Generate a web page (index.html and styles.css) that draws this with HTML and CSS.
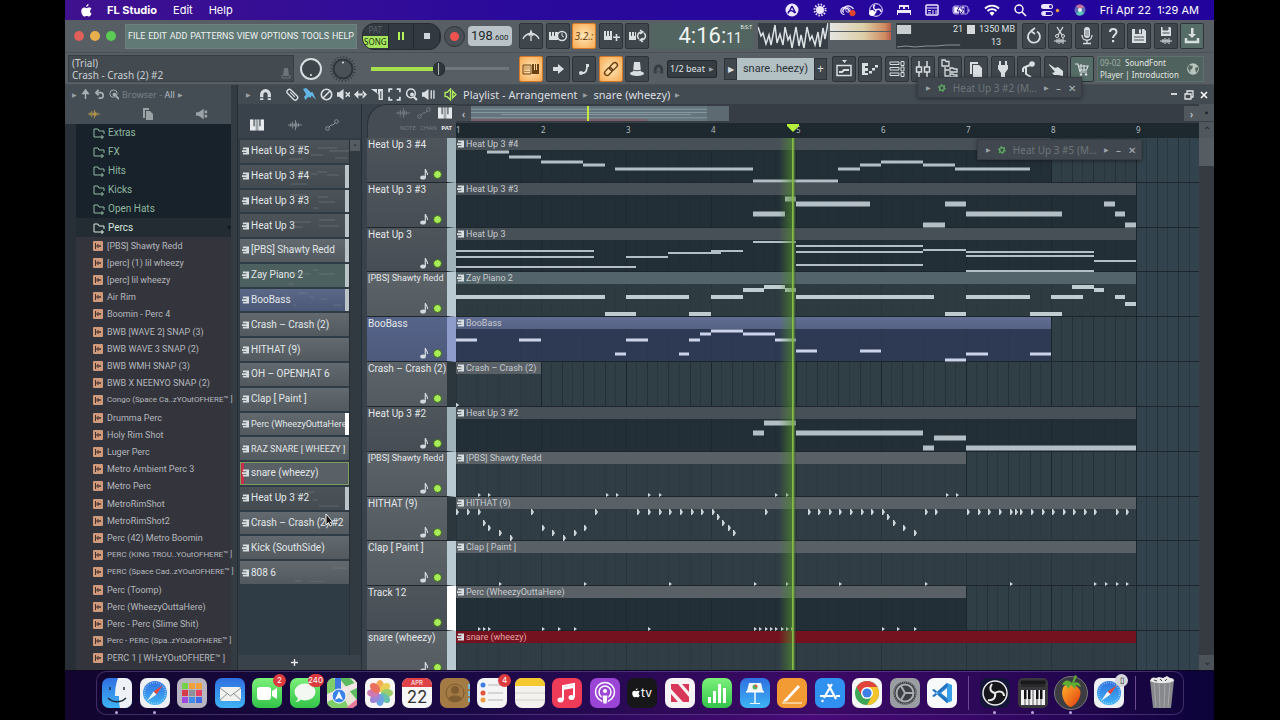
FILE: index.html
```
<!DOCTYPE html>
<html lang="en">
<head>
<meta charset="utf-8">
<title>FL Studio</title>
<link rel="stylesheet" href="styles.css">
</head>
<body>
<svg class="defs" aria-hidden="true">
  <defs>
    <marker id="hit" markerWidth="5" markerHeight="5" refX="0" refY="2" markerUnits="userSpaceOnUse"><path d="M0 0L3 2L0 4z" fill="#cfd6da"/></marker>
    <marker id="hat" markerWidth="5" markerHeight="6" refX="0" refY="3" markerUnits="userSpaceOnUse"><path d="M0 0h1l2 3l-2 3h-1z" fill="#cfd6da"/></marker>
    <linearGradient id="gblue" x2="0" y2="1"><stop stop-color="#2f6fe0"/><stop offset="1" stop-color="#3fb4f5"/></linearGradient>
    <linearGradient id="ggreen" x2="0" y2="1"><stop stop-color="#7cf07a"/><stop offset="1" stop-color="#33c44a"/></linearGradient>
    <linearGradient id="gfruit" x2="1" y2="1"><stop stop-color="#ffb42a"/><stop offset="1" stop-color="#e23a12"/></linearGradient>
  </defs>
  <symbol id="i-clip" viewBox="0 0 8 8"><path d="M1 0h7v8H1V6h4V5H0V3h5V2H1z" fill="#d8dde0"/></symbol>
  <symbol id="i-folder" viewBox="0 0 12 12"><path d="M1 2h4l1 2h5v3M1 2v8h6M7 10h4M9 8v4" fill="none" stroke="currentColor"/></symbol>
  <symbol id="i-sample" viewBox="0 0 10 10"><rect width="10" height="10" rx="1" fill="#cf9a7c"/><path d="M2.500 2v6M3 5h5M5 3v4M7 4v2" stroke="#47302a" fill="none"/></symbol>
  <symbol id="i-note" viewBox="0 0 9 12"><ellipse cx="3" cy="9.500" rx="2.800" ry="2" fill="#d4dadd"/><path d="M5.300 9.500V1c0 2 2.700 3 2.200 6" fill="none" stroke="#d4dadd" stroke-width="1.200"/></symbol>
  <symbol id="i-wave" viewBox="0 0 16 12"><path d="M0 6h16M3 4v4M5 2v8M7 4v4M8.500 0v12M10 3v6M12 4v4" fill="none" stroke="currentColor"/></symbol>
  <symbol id="i-auto" viewBox="0 0 14 12"><circle cx="2.500" cy="9.500" r="1.800" fill="none" stroke="currentColor"/><circle cx="11.500" cy="2.500" r="1.800" fill="none" stroke="currentColor"/><path d="M4 8l2-2h2l2-2" fill="none" stroke="currentColor"/></symbol>
  <symbol id="i-keys" viewBox="0 0 12 10"><path d="M0 0h3v6h1V0h1v10H0zM5.500 0h1v10h-1zM7 0h1v6h1V0h3v10H7z" fill="currentColor"/></symbol>
  <symbol id="i-gear" viewBox="0 0 12 12"><circle cx="6" cy="6" r="3.500" fill="none" stroke="#5fae63" stroke-width="2"/><circle cx="6" cy="6" r="5" fill="none" stroke="#5fae63" stroke-width="2" stroke-dasharray="2 3.240"/></symbol>
  <symbol id="i-magnet" viewBox="0 0 12 12"><path d="M2.500 11V6a3.500 3.500 0 0 1 7 0v5" fill="none" stroke="currentColor" stroke-width="3"/><path d="M0 9h12" stroke="#454d54"/></symbol>
  <symbol id="i-compass" viewBox="0 0 30 30"><rect width="30" height="30" rx="7" fill="#eef1f4"/><circle cx="15" cy="15" r="12" fill="url(#gblue)"/><circle cx="15" cy="15" r="10.500" fill="none" stroke="#bfe2ff" stroke-dasharray=".6 1.600" stroke-width="1.500"/><path d="M23 7l-6.500 9.500-3-3z" fill="#e2483d"/><path d="M7 23l6.500-9.500 3 3z" fill="#f4f4f4"/></symbol>
</svg>

<div class="desktop">
  <header class="menubar">
    <svg class="apple" viewBox="0 0 12 14"><path d="M8.300 0c.1 1.600-1.100 3-2.600 3.100C5.600 1.600 6.900.2 8.300 0zM11.600 10.300c-.6 1.500-1.600 3.200-2.900 3.200-1 0-1.200-.6-2.400-.6s-1.500.6-2.400.6C2.200 13.500.3 10.300.3 7.700c0-2.500 1.600-3.900 3.200-3.900 1 0 1.900.7 2.600.7.600 0 1.700-.8 3-.8 1 0 1.900.5 2.400 1.300-2.300 1.400-1.900 4.400.1 5.300z" fill="#fff"/></svg>
    <nav class="macmenu"><a href="#" class="strong">FL Studio</a><a href="#">Edit</a><a href="#">Help</a></nav>
    <div class="status">
      <svg viewBox="0 0 16 14"><circle cx="8" cy="7" r="6.500" fill="#eee8ff"/><path d="M8 3l3.500 7M8 3l-2 4M4 10.500c1-4 4-4 7-.5" stroke="#2a0b9a" stroke-width="1.500" fill="none"/></svg>
      <svg viewBox="0 0 16 14"><circle cx="8" cy="7" r="4" fill="#eee8ff"/><circle cx="8" cy="7" r="5.500" fill="none" stroke="#eee8ff" stroke-width="2" stroke-dasharray="1.400 1.480"/></svg>
      <svg viewBox="0 0 18 14"><path d="M5 12a4 4 0 0 1 0-8 6 5 0 0 1 10 2M4 10a3 3 0 1 1 5-4l2 3" fill="none" stroke="#eee8ff" stroke-width="1.500"/><circle cx="9" cy="7" r="2.500" fill="none" stroke="#eee8ff"/><circle cx="14" cy="10.500" r="3.500" fill="#e2452e"/></svg>
      <svg viewBox="0 0 16 14"><circle cx="8" cy="7" r="6.300" fill="none" stroke="#eee8ff"/><path d="M8 7c-3-1-3-4-1-5M8 7c3-2 5 0 5 2M8 7c0 3-2 4-4 4" fill="none" stroke="#eee8ff" stroke-width="1.500"/><circle cx="4" cy="10" r="3" fill="#fff"/></svg>
      <svg viewBox="0 0 16 14"><path d="M3 6V2h10v4h-1V4H9v2H7V4H4v2zM1 7h14v5h-1v-2H2v2H1z" fill="#eee8ff"/></svg>
      <svg viewBox="0 0 16 14"><rect x="2" y="2" width="12" height="10" rx="1" fill="none" stroke="#eee8ff" stroke-width="1.500"/><path d="M3 5h10M4 7.500h3M4 10h3M9 7v4M12 7v4" stroke="#eee8ff"/></svg>
      <svg class="battery" viewBox="0 0 20 14"><rect x="1" y="3" width="15" height="8" rx="2" fill="none" stroke="#b9aee8"/><path d="M2 4h10v6H2zM17 6v3" fill="#fff" stroke="#b9aee8"/><path d="M9 1L5 8h3l-1 5 5-7H9z" fill="#fff" stroke="#2a0b9a"/></svg>
      <svg viewBox="0 0 16 14"><path d="M1 5.500a10 10 0 0 1 14 0M3.500 8a6.500 6.500 0 0 1 9 0" fill="none" stroke="#fff" stroke-width="1.800"/><path d="M5.500 10a3.500 3.500 0 0 1 5 0L8 13z" fill="#fff"/></svg>
      <svg viewBox="0 0 14 14"><circle cx="6" cy="6" r="4" fill="none" stroke="#fff" stroke-width="1.400"/><path d="M9 9l4 4" stroke="#fff" stroke-width="1.600"/></svg>
      <svg class="control" viewBox="0 0 20 14"><rect x="1" y="1" width="12" height="5" rx="2.500" fill="#eee8ff"/><circle cx="10.500" cy="3.500" r="1.500" fill="#2a0b9a"/><rect x="1.500" y="8.500" width="11" height="4" rx="2" fill="none" stroke="#eee8ff"/><circle cx="4" cy="10.500" r="2" fill="#eee8ff"/><circle cx="17.500" cy="7.500" r="1.700" fill="#f09a3a"/></svg>
      <svg viewBox="0 0 14 14"><circle cx="7" cy="7" r="5.500" fill="#5c6db8"/><path d="M7 7L3 3a5 5 0 0 1 8 1z" fill="#c76d9c"/><path d="M7 7l-4 4a5 5 0 0 0 8-1z" fill="#57c6b6"/><circle cx="7" cy="7" r="2" fill="#e8eef8"/></svg>
      <span class="clock">Fri Apr 22&nbsp; 1:29 AM</span>
    </div>
  </header>

  <main class="window">
    <section class="bar">
      <div class="left-tools">
        <div class="lights"><button aria-label="Close" class="red"></button><button aria-label="Minimise" class="amber"></button><button aria-label="Zoom" class="lime"></button></div>
        <nav class="appmenu"><a href="#">FILE</a><a href="#">EDIT</a><a href="#">ADD</a><a href="#">PATTERNS</a><a href="#">VIEW</a><a href="#">OPTIONS</a><a href="#">TOOLS</a><a href="#">HELP</a></nav>
      </div>
      <div class="transport">
        <div class="playgroup">
          <button class="mode"><span>PAT</span><span class="on">SONG</span></button>
          <button aria-label="Pause"><svg viewBox="0 0 8 8"><path d="M1 0h2v8H1zM5 0h2v8H5z" fill="#b6f25a"/></svg></button>
          <button aria-label="Stop"><svg viewBox="0 0 8 8"><path d="M1 1h6v6H1z" fill="#cdd3da"/></svg></button>
        </div>
        <button class="record" aria-label="Record"></button>
        <output class="tempo">198<small>.600</small></output>
      </div>
      <div class="five">
        <button class="tool" aria-label="Metronome"><svg viewBox="0 0 20 20"><path d="M2 13c1-3 4-5 8-6 4 1 7 3 8 6M10 5v10M8 10l2-5 2 5" fill="none" stroke="currentColor" stroke-width="1.300"/></svg></button>
        <button class="tool" aria-label="Wait for input"><svg viewBox="0 0 20 20"><path d="M1 6h2v4h1V6h2v4h1V6h3v8H1z" fill="currentColor"/><circle cx="14" cy="10" r="4.500" fill="#3b4248" stroke="currentColor" stroke-width="1.500"/><path d="M14 7v3l2 1" stroke="currentColor" fill="none"/></svg></button>
        <button class="tool hot digits">3.2.:</button>
        <button class="tool" aria-label="Overdub"><svg viewBox="0 0 20 20"><path d="M3 5h2v5h1V5h2v5h1V5h2v9H3zM12 10.500h7V12h-7zM14.700 8h1.600v7h-1.600z" fill="currentColor"/></svg></button>
        <button class="tool" aria-label="Loop record"><svg viewBox="0 0 20 20"><path d="M2 6h2v4h1V6h2v4h1V6h1v8H2z" fill="currentColor"/><path d="M15 6a4 4 0 0 0-3 7M14 14a4 4 0 0 0 3-7M13 4l3 2-3 2M16 12l-3 2 3 2" fill="none" stroke="currentColor" stroke-width="1.500"/></svg></button>
      </div>
      <div class="time"><span class="big">4:16:</span><span class="small">11</span><small>B:S:T</small></div>
      <svg class="scope" viewBox="0 0 70 26"><path d="M0 4l3 9 2-3 3 11 3-9 2 10 4-20 2 18 3-9 3 11 2-18 3 13 2-4 2 12 4-21 3 19 2-11 3 13 3-21 3 13 2-4 3 9 3-13 2 15 3-19 2 11 3-16" fill="none" stroke="#dde2e5" stroke-width="1.500"/></svg>
      <div class="peaks"><div class="peak"></div><div class="peak"></div></div>
      <div class="cpu"><svg viewBox="0 0 72 26" preserveAspectRatio="none"><path d="M1 2h15v9H1z" fill="#c9ced0"/><path d="M1 24l10-1 9 1 12-1 10 0 12-1 14 0" fill="none" stroke="#8f979b"/></svg><span class="load">21</span><span class="mem"><i></i>1350 MB</span><span class="poly">13</span></div>
      <div class="seven">
        <button class="tool" aria-label="Undo"><svg viewBox="0 0 20 20"><path d="M8 5a6 6 0 1 0 5 .5M11 2L7 5l4 3" fill="none" stroke="currentColor" stroke-width="1.800"/></svg></button>
        <button class="tool" aria-label="Cut"><svg viewBox="0 0 20 20"><path d="M7 1l5 8M13 1L8 9" stroke="currentColor" stroke-width="1.300"/><circle cx="7" cy="10" r="1.500" fill="none" stroke="currentColor"/><circle cx="13" cy="10" r="1.500" fill="none" stroke="currentColor"/><path d="M4 15h12M7 13v4M9 12v6M11 13v4M13 12v6" stroke="currentColor"/></svg></button>
        <button class="tool" aria-label="Record audio"><svg viewBox="0 0 20 20"><rect x="7" y="1" width="6" height="11" rx="3" fill="currentColor"/><path d="M5 9c0 7 10 7 10 0M10 14v3M6 17.500h8" fill="none" stroke="currentColor" stroke-width="1.300"/><path d="M8 5h4M8 7h4M8 9h4" stroke="#4a5258" stroke-width=".7"/></svg></button>
        <button class="tool" aria-label="Help"><svg viewBox="0 0 20 20"><path d="M7 6c0-4 6.500-4 6.500 0 0 3-3.500 2.500-3.500 6" fill="none" stroke="currentColor" stroke-width="2"/><rect x="9" y="14" width="2.200" height="2.200" fill="currentColor"/></svg></button>
        <button class="tool" aria-label="Save"><svg viewBox="0 0 20 20"><path d="M3 3h12l2 2v12H3z" fill="currentColor"/><path d="M6 3h7v5H6z" fill="#4a5258"/><path d="M5 11h10M5 14h10" stroke="#4a5258"/><path d="M10 3.500h2v4h-2z" fill="currentColor"/></svg></button>
        <button class="tool" aria-label="Export"><svg viewBox="0 0 20 20"><path d="M5 1h9l1 1v8H5z" fill="currentColor"/><path d="M7 1h5v3H7zM6.500 7h7" fill="#4a5258" stroke="#4a5258"/><path d="M4 15h12M7 13v4M9 12v6M11 13v4M13 12v6" stroke="currentColor"/></svg></button>
        <button class="tool green" aria-label="Download"><svg viewBox="0 0 20 20"><path d="M9 2h2.500v6H14l-4 4-4-4h3z" fill="currentColor"/><path d="M4 12v4h12v-4" fill="none" stroke="currentColor" stroke-width="2.500"/></svg></button>
      </div>
    </section>

    <section class="bar second">
      <div class="hint"><span>(Trial)</span><span>Crash - Crash (2) #2</span><svg viewBox="0 0 10 12"><path d="M3 1h4l1 8H2z" fill="#6d757b"/><path d="M1 8v3h8V8" fill="none" stroke="#6d757b"/></svg></div>
      <div class="knobs">
        <svg viewBox="0 0 28 28"><circle cx="14" cy="14" r="10" fill="#3e454a" stroke="#d7dcdf" stroke-width="2"/><circle cx="14" cy="20" r="1" fill="#dfe3e5"/></svg>
        <svg viewBox="0 0 28 28"><circle cx="14" cy="14" r="12" fill="none" stroke="#343b40" stroke-width="2" stroke-dasharray="1 2.140"/><circle cx="14" cy="14" r="9.500" fill="#4b5257" stroke="#2f363b" stroke-width="2"/><circle cx="14" cy="7.500" r="1" fill="#dfe3e5"/></svg>
      </div>
      <input class="volume" type="range" min="0" max="100" value="49" aria-label="Main pitch">
      <div class="five">
        <button class="tool hot" aria-label="Typing keyboard"><svg viewBox="0 0 20 20"><path d="M2 6h8v9H2z" fill="none" stroke="currentColor"/><path d="M3.500 8h5M3.500 10h5M3.500 12.500h5" stroke="currentColor" stroke-dasharray="1 1"/><path d="M11 5h2v6h1V5h1v6h1V5h2v10h-7z" fill="currentColor"/></svg></button>
        <button class="tool" aria-label="Step"><svg viewBox="0 0 20 20"><path d="M5 8h5V5l6 5-6 5v-3H5z" fill="currentColor"/></svg></button>
        <button class="tool" aria-label="Glide"><svg viewBox="0 0 20 20"><path d="M6 14h3c3 0 4-2 4-7" fill="none" stroke="currentColor" stroke-width="1.800"/><circle cx="7" cy="14" r="2" fill="currentColor"/><path d="M12 5h3v3h-3z" fill="currentColor"/></svg></button>
        <button class="tool hot" aria-label="Link"><svg viewBox="0 0 20 20"><g transform="rotate(-45 10 10)" fill="none" stroke="currentColor" stroke-width="1.400"><rect x="2" y="7.500" width="9" height="5" rx="2.500"/><rect x="9" y="7.500" width="9" height="5" rx="2.500"/></g></svg></button>
        <button class="tool" aria-label="Wizard"><svg viewBox="0 0 20 20"><path d="M7 3h6l1 10H6z" fill="currentColor"/><ellipse cx="10" cy="14.500" rx="7" ry="2.500" fill="currentColor"/><path d="M6 11c2 1 6 1 8 0" fill="none" stroke="#444b51"/></svg></button>
      </div>
      <div class="snap"><svg viewBox="0 0 12 12"><use href="#i-magnet"/></svg><select aria-label="Snap"><option>1/2 beat</option></select><span class="tri">▶</span></div>
      <div class="patsel"><button aria-label="Pattern menu">▶</button><output>snare..heezy)</output><button aria-label="Add pattern">+</button></div>
      <div class="ten">
        <button class="tool" aria-label="Playlist"><svg viewBox="0 0 20 20"><path d="M8 1h5l-2.500 3z" fill="currentColor"/><path d="M3 6.500h14v10H3z" fill="none" stroke="currentColor" stroke-width="1.500"/><path d="M5 13h3l2-2h5" fill="none" stroke="currentColor" stroke-width="2"/></svg></button>
        <button class="tool" aria-label="Piano roll"><svg viewBox="0 0 20 20"><path d="M2 4h6v3H5v2h3v3H5v2h3v2H2zM9 12h3v2.500H9zM12 9h3v2.500h-3zM15 6h3v2.500h-3z" fill="currentColor"/></svg></button>
        <button class="tool" aria-label="Channel rack"><svg viewBox="0 0 20 20"><path d="M3 3h9v2.500H3zM3 8.500h9V11H3zM3 14h9v2.500H3z" fill="none" stroke="currentColor"/><path d="M14 2.500h3v4h-3zM14 8h3v4h-3zM14 13.500h3v4h-3z" fill="none" stroke="currentColor"/></svg></button>
        <button class="tool" aria-label="Mixer"><svg viewBox="0 0 20 20"><path d="M6 2v6M6 13v5M14 2v6M14 13v5" stroke="currentColor" stroke-width="1.500"/><rect x="3.500" y="8" width="5" height="5" fill="none" stroke="currentColor" stroke-width="1.500"/><rect x="11.500" y="8" width="5" height="5" fill="none" stroke="currentColor" stroke-width="1.500"/></svg></button>
        <button class="tool" aria-label="Browser"><svg viewBox="0 0 20 20"><path d="M2 1h3l1 1.500h3V7H2zM5 8v9h4M5 11h4M10 9h3l1 1h3v3h-7zM10 15h3l1 1h3v2h-7z" fill="none" stroke="currentColor" stroke-width="1.300"/></svg></button>
        <button class="tool" aria-label="Project picker"><svg viewBox="0 0 20 20"><path d="M4 3h8v2H6v10H4z" fill="currentColor"/><path d="M7 6h6l3 3v9H7z" fill="currentColor"/></svg></button>
        <button class="tool" aria-label="Plugins"><svg viewBox="0 0 20 20"><path d="M7 2v5M13 2v5" stroke="currentColor" stroke-width="2"/><path d="M5 6h10v4l-3 4v4H8v-4l-3-4z" fill="currentColor"/></svg></button>
        <button class="tool" aria-label="Tempo tapper"><svg viewBox="0 0 20 20"><circle cx="13" cy="5" r="2.800" fill="currentColor"/><path d="M4 9l7-3M7 8v7l5 3M4 9v4" fill="none" stroke="currentColor" stroke-width="2"/></svg></button>
        <button class="tool" aria-label="Touch"><svg viewBox="0 0 20 20"><path d="M3 5l6 4 3-1 5 4v5l-5-1H8l-2-2 3-1-6-7z" fill="currentColor"/></svg></button>
        <button class="tool green" aria-label="Shop"><svg viewBox="0 0 20 20"><path d="M3 5h3l2 8h7M7 7h9l-1.500 4H8M9 5v7M12 6v6" fill="none" stroke="currentColor" stroke-width="1.200"/><circle cx="9" cy="15.500" r="1.300" fill="currentColor"/><circle cx="14" cy="15.500" r="1.300" fill="currentColor"/></svg></button>
      </div>
      <a href="#" class="news"><span><em>09-02</em>&nbsp; SoundFont<br>Player | Introduction</span><svg viewBox="0 0 12 12"><circle cx="6" cy="6" r="5.800" fill="#b9c5bf"/><path d="M2 2l4 1-1 3-2 1 1 3-2-2-1-3zM8 5l3-1v3l-2 3z" fill="#55685f"/></svg></a>
    </section>

    <section class="work">
      <aside class="browser">
        <div class="browser-title"><span class="tri">▶</span><svg viewBox="0 0 10 12"><path d="M5 11V3M2 5l3-4 3 4z" stroke="#aab2b6" fill="#aab2b6" stroke-width="1.500"/></svg><svg viewBox="0 0 10 12"><path d="M3 4h3a3 3 0 0 1 0 6H4M4 1L1 4l3 3" fill="none" stroke="#aab2b6" stroke-width="1.800"/></svg><svg viewBox="0 0 12 12"><circle cx="6" cy="5" r="4" fill="none" stroke="#aab2b6"/><circle cx="7" cy="6" r="2" fill="#aab2b6"/><path d="M9 8l3 3" stroke="#aab2b6" stroke-width="2"/></svg><span>Browser - <b>All</b></span><span class="tri">▶</span></div>
        <div class="browser-tabs">
          <button aria-label="Sounds" class="gold"><svg viewBox="0 0 16 12"><use href="#i-wave"/></svg></button>
          <button aria-label="Files"><svg viewBox="0 0 12 12"><path d="M1 0h6v2H3v8H1zM4 3h4l3 3v6H4z" fill="currentColor"/></svg></button>
          <button aria-label="Plugin"><svg viewBox="0 0 14 12"><path d="M0 4h3l6-4v12L3 8H0zM10 2h3v3h-3zM10 7h3v3h-3z" fill="currentColor"/></svg></button>
        </div>
        <div class="tree">
          <ul class="folders">
            <li><svg><use href="#i-folder"/></svg>Extras</li><li><svg><use href="#i-folder"/></svg>FX</li><li><svg><use href="#i-folder"/></svg>Hits</li><li><svg><use href="#i-folder"/></svg>Kicks</li><li><svg><use href="#i-folder"/></svg>Open Hats</li><li class="open"><svg><use href="#i-folder"/></svg>Percs<span>▾</span></li>
          </ul>
          <ul class="files">
            <li><svg><use href="#i-sample"/></svg>[PBS] Shawty Redd</li>
            <li><svg><use href="#i-sample"/></svg>[perc] (1) lil wheezy</li>
            <li><svg><use href="#i-sample"/></svg>[perc] lil wheezy</li>
            <li><svg><use href="#i-sample"/></svg>Air Rim</li>
            <li><svg><use href="#i-sample"/></svg>Boomin - Perc 4</li>
            <li><svg><use href="#i-sample"/></svg>BWB [WAVE 2] SNAP (3)</li>
            <li><svg><use href="#i-sample"/></svg>BWB WAVE 3 SNAP (2)</li>
            <li><svg><use href="#i-sample"/></svg>BWB WMH SNAP (3)</li>
            <li><svg><use href="#i-sample"/></svg>BWB X NEENYO SNAP (2)</li>
            <li class="long"><svg><use href="#i-sample"/></svg>Congo (Space Ca..zYOutOFHERE™ ]</li>
            <li><svg><use href="#i-sample"/></svg>Drumma Perc</li>
            <li><svg><use href="#i-sample"/></svg>Holy Rim Shot</li>
            <li><svg><use href="#i-sample"/></svg>Luger Perc</li>
            <li><svg><use href="#i-sample"/></svg>Metro Ambient Perc 3</li>
            <li><svg><use href="#i-sample"/></svg>Metro Perc</li>
            <li><svg><use href="#i-sample"/></svg>MetroRimShot</li>
            <li><svg><use href="#i-sample"/></svg>MetroRimShot2</li>
            <li><svg><use href="#i-sample"/></svg>Perc (42) Metro Boomin</li>
            <li class="long"><svg><use href="#i-sample"/></svg>PERC (KING TROU..YOutOFHERE™ ]</li>
            <li class="long"><svg><use href="#i-sample"/></svg>PERC (Space Cad..zYOutOFHERE™ ]</li>
            <li><svg><use href="#i-sample"/></svg>Perc (Toomp)</li>
            <li><svg><use href="#i-sample"/></svg>Perc (WheezyOuttaHere)</li>
            <li><svg><use href="#i-sample"/></svg>Perc - Perc (Slime Shit)</li>
            <li class="long"><svg><use href="#i-sample"/></svg>Perc - PERC (Spa..zYOutOFHERE™ ]</li>
            <li><svg><use href="#i-sample"/></svg>PERC 1 [ WHzYOutOFHERE™ ]</li>
          </ul>
        </div>
      </aside>
      <div class="splitter"></div>
      <section class="playlist">
        <div class="pl-title">
          <span class="tri">▶</span>
          <div class="pl-tools">
            <svg viewBox="0 0 12 12"><use href="#i-magnet"/></svg>
            <svg class="after" viewBox="0 0 12 12"><g transform="rotate(45 6 6)"><rect x="0" y="4" width="12" height="4.500" rx="2" fill="none" stroke="currentColor" stroke-width="1.300"/><path d="M3 6h6" stroke="currentColor"/></g></svg>
            <svg class="sel" viewBox="0 0 12 12"><path d="M0 1l3-1 4 4h2l3 7-4-4-1 2-2-1-3 3-1-3 2-2z" fill="currentColor"/></svg>
            <svg viewBox="0 0 12 12"><circle cx="6" cy="6" r="4.800" fill="none" stroke="currentColor" stroke-width="1.500"/><path d="M3 9l6-6" stroke="currentColor" stroke-width="1.500"/></svg>
            <svg viewBox="0 0 12 12"><path d="M0 4h2l4-3v10L2 8H0z" fill="currentColor"/><path d="M8 4l4 4M12 4L8 8" stroke="currentColor" stroke-width="1.400"/></svg>
            <svg viewBox="0 0 12 12"><path d="M0 6l4-4v8zM12 6L8 2v8zM3 5h6v2H3z" fill="currentColor"/></svg>
            <svg viewBox="0 0 12 12"><path d="M0 1h11v10H7V6z" fill="currentColor"/><path d="M6 1v4M9 3v7" stroke="#454d54"/></svg>
            <svg viewBox="0 0 12 12"><path d="M1 4V1h3M8 1h3v3M11 8v3H8M4 11H1V8" fill="none" stroke="currentColor" stroke-width="1.600"/></svg>
            <svg viewBox="0 0 12 12"><circle cx="5.500" cy="5" r="4" fill="none" stroke="currentColor" stroke-width="1.400"/><circle cx="6.500" cy="6" r="1.800" fill="currentColor"/><path d="M8 8l3 3" stroke="currentColor" stroke-width="2"/></svg>
            <svg viewBox="0 0 12 12"><path d="M0 4h2l4-3v10L2 8H0z" fill="currentColor"/><path d="M8.500 2v8M11 2v8" stroke="currentColor" stroke-width="1.300"/></svg>
          </div>
          <svg class="speaker" viewBox="0 0 12 12"><path d="M1 4h2l3-3v10L3 8H1zM8 3l3 3-3 3z" fill="none" stroke="#b2ea5d" stroke-width="1.300"/></svg>
          <span class="crumb">Playlist - Arrangement</span><span class="tri">▶</span><span class="crumb">snare (wheezy)</span><span class="tri">▶</span>
          <div class="winbtns"><button aria-label="Minimise"><svg viewBox="0 0 10 10"><path d="M2 4h6" stroke="#fff" stroke-width="1.500"/></svg></button><button aria-label="Restore"><svg viewBox="0 0 10 10"><path d="M1 4h6v5H1zM3 4V1h6v6H7" fill="none" stroke="#e3e6e8" stroke-width="1.300"/></svg></button><button aria-label="Close"><svg viewBox="0 0 10 10"><path d="M2 2l6 6M8 2L2 8" stroke="#fff" stroke-width="1.500"/></svg></button></div>
        </div>
        <div class="pl-body">
          <aside class="picker">
            <div class="picker-tabs"><button aria-label="Patterns" class="lit"><svg viewBox="0 0 12 10"><use href="#i-keys"/></svg></button><button aria-label="Audio"><svg viewBox="0 0 16 12"><use href="#i-wave"/></svg></button><button aria-label="Automation"><svg viewBox="0 0 14 12"><use href="#i-auto"/></svg></button></div>
            <div class="picker-main">
              <ul class="patterns">
                <li class="dim edge0"><svg><use href="#i-clip"/></svg>Heat Up 3 #5<svg class="mini" viewBox="0 0 60 20"><path d="M0 5h18M28 7h20M0 10h14M22 14h12M40 10h20M0 18h14M46 17h12"/></svg></li>
                <li class="dim"><svg><use href="#i-clip"/></svg>Heat Up 3 #4<svg class="mini" viewBox="0 0 60 20"><path d="M26 8h6M32 6h10M42 9h12M6 18h16"/></svg></li>
                <li class="dim"><svg><use href="#i-clip"/></svg>Heat Up 3 #3<svg class="mini" viewBox="0 0 60 20"><path d="M6 4h16M34 11h16M28 17h5M33 6h10"/></svg></li>
                <li class="dim"><svg><use href="#i-clip"/></svg>Heat Up 3<svg class="mini" viewBox="0 0 60 20"><path d="M6 7h20M34 5h16M34 11h20M6 12h12"/></svg></li>
                <li><svg><use href="#i-clip"/></svg>[PBS] Shawty Redd</li>
                <li class="teal"><svg><use href="#i-clip"/></svg>Zay Piano 2<svg class="mini" viewBox="0 0 60 20"><path d="M6 9h20M34 9h16M28 5h5M4 19h5"/></svg></li>
                <li class="blue"><svg><use href="#i-clip"/></svg>BooBass<svg class="mini" viewBox="0 0 60 20"><path d="M0 6h4M14 3h8M24 7h4M36 9h6M48 15h8M8 15h3"/></svg></li>
                <li class="edge0"><svg><use href="#i-clip"/></svg>Crash – Crash (2)</li>
                <li class="edge0"><svg><use href="#i-clip"/></svg>HITHAT (9)</li>
                <li class="edge0"><svg><use href="#i-clip"/></svg>OH – OPENHAT 6</li>
                <li class="edge0"><svg><use href="#i-clip"/></svg>Clap [ Paint ]</li>
                <li class="white long"><svg><use href="#i-clip"/></svg>Perc (WheezyOuttaHere</li>
                <li class="edge0 long"><svg><use href="#i-clip"/></svg>RAZ SNARE [ WHEEZY ]</li>
                <li class="edge0 current"><svg><use href="#i-clip"/></svg>snare (wheezy)</li>
                <li class="dim"><svg><use href="#i-clip"/></svg>Heat Up 3 #2<svg class="mini" viewBox="0 0 60 20"><path d="M10 6h6M20 4h10M28 12h5M34 18h20"/></svg></li>
                <li class="edge0"><svg><use href="#i-clip"/></svg>Crash – Crash (2) #2</li>
                <li class="edge0"><svg><use href="#i-clip"/></svg>Kick (SouthSide)</li>
                <li class="edge0"><svg><use href="#i-clip"/></svg>808 6<svg class="mini" viewBox="0 0 60 20"><path d="M44 6h14M6 19h6M20 20h16"/></svg></li>
              </ul>
              <div class="picker-scroll"><span>▪</span></div>
            </div>
            <button class="add" aria-label="Add"><svg viewBox="0 0 8 8"><path d="M4 0v8M0 4h8" stroke="#e7eaec" stroke-width="1.500"/></svg></button>
          </aside>

          <div class="arrange">
            <div class="head-tabs">
              <div class="icons"><svg viewBox="0 0 16 12"><use href="#i-wave"/></svg><svg viewBox="0 0 14 12"><use href="#i-auto"/></svg><svg class="lit" viewBox="0 0 12 10"><use href="#i-keys"/></svg></div>
              <div class="modes"><span>NOTE</span><span>CHAN</span><b>PAT</b></div>
            </div>
            <div class="timeline-top">
              <div class="overview"><button aria-label="Left">‹</button>
                <svg viewBox="0 0 258 14" preserveAspectRatio="none"><rect width="258" height="14" fill="#5e6a71"/><rect width="236" height="14" fill="#65757d"/><path d="M0 3h236M0 6h236M30 8h190M0 11h236" stroke="#87979f"/><path d="M0 13h176" stroke="#8b4a56"/><path d="M117 0v14" stroke="#c6e83c" stroke-width="2"/></svg>
                <button class="end" aria-label="Right">›</button></div>
              <div class="ruler"><span>1</span><span>2</span><span>3</span><span>4</span><span>5</span><span>6</span><span>7</span><span>8</span><span>9</span></div>
            </div>
            <div class="corner"><span>▪</span><span>⌃</span></div>

            <div class="tracks">
              <div class="heads">
                <div class="head dark"><span>Heat Up 3 #4</span><svg><use href="#i-note"/></svg></div>
                <div class="head dark"><span>Heat Up 3 #3</span><svg><use href="#i-note"/></svg></div>
                <div class="head dark"><span>Heat Up 3</span><svg><use href="#i-note"/></svg></div>
                <div class="head tight"><span>[PBS] Shawty Redd</span><svg><use href="#i-note"/></svg></div>
                <div class="head blue"><span>BooBass</span><svg><use href="#i-note"/></svg></div>
                <div class="head none"><span>Crash – Crash (2)</span><svg><use href="#i-note"/></svg></div>
                <div class="head dark"><span>Heat Up 3 #2</span><svg><use href="#i-note"/></svg></div>
                <div class="head tight"><span>[PBS] Shawty Redd</span><svg><use href="#i-note"/></svg></div>
                <div class="head none"><span>HITHAT (9)</span><svg><use href="#i-note"/></svg></div>
                <div class="head"><span>Clap [ Paint ]</span><svg><use href="#i-note"/></svg></div>
                <div class="head dark white"><span>Track 12</span></div>
                <div class="head"><span>snare (wheezy)</span><svg><use href="#i-note"/></svg></div>
              </div>
              <div class="lanes">
                <div class="lane"><div class="clip b7"><h4><svg><use href="#i-clip"/></svg>Heat Up 3 #4</h4><svg class="notes n3" viewBox="0 0 681 45"><path d="M31 14h22M53 19h32M85 24h42M127 27h22M159 31h138M297 43h85M382 31h22M404 27h21M425 24h42M467 27h32M499 31h75"/></svg></div></div>
                <div class="lane"><div class="clip b8"><h4><svg><use href="#i-clip"/></svg>Heat Up 3 #3</h4><svg class="notes n5" viewBox="0 0 681 45"><path d="M297 31h32M329 16h11M340 21h74M467 42h22M489 21h21M510 31h96M648 21h11M659 31h10M669 42h11"/></svg></div></div>
                <div class="lane"><div class="clip b8"><h4><svg><use href="#i-clip"/></svg>Heat Up 3</h4><svg class="notes n2" viewBox="0 0 681 45"><path d="M0 23h138M0 29h138M0 39h180M170 29h42M212 25h53M255 23h32M297 14h43M340 18h127M340 24h127M340 37h127M467 22h43M510 24h128M510 28h128M510 43h128M638 33h42"/></svg></div></div>
                <div class="lane"><div class="clip b8 teal"><h4><svg><use href="#i-clip"/></svg>Zay Piano 2</h4><svg class="notes n4" viewBox="0 0 681 45"><path d="M0 25h149M170 25h63M255 25h32M149 42h31M233 42h22M287 18h21M308 15h21M329 18h11M340 25h138M489 42h21M510 25h64M574 42h32M595 25h32M616 15h22M638 18h10M659 25h10M669 32h11"/></svg></div></div>
                <div class="lane"><div class="clip b7 blue"><h4><svg><use href="#i-clip"/></svg>BooBass</h4><svg class="notes n3" viewBox="0 0 681 45"><path d="M0 23h21M63 23h22M159 37h11M170 23h22M223 37h10M233 23h11M244 17h11M255 14h32M287 17h32M319 23h21M340 34h21M404 34h21M489 43h21M510 37h22M574 37h21"/></svg></div></div>
                <div class="lane"><div class="clip b1 grey"><h4><svg><use href="#i-clip"/></svg>Crash – Crash (2)</h4><svg class="notes" viewBox="0 0 681 45"><polyline class="hits" points="0,43 0,43"/></svg></div></div>
                <div class="lane"><div class="clip b8"><h4><svg><use href="#i-clip"/></svg>Heat Up 3 #2</h4><svg class="notes n5" viewBox="0 0 681 45"><path d="M297 26h11M308 16h32M340 26h127M467 41h11M478 31h32M510 41h170"/></svg></div></div>
                <div class="lane"><div class="clip b6 grey"><h4><svg><use href="#i-clip"/></svg>[PBS] Shawty Redd</h4><svg class="notes" viewBox="0 0 681 45"><polyline class="hits" points="22,43 32,43 150,43 160,43 192,43 203,43 319,43 330,43 490,43 500,43"/></svg></div></div>
                <div class="lane"><div class="clip b8 grey"><h4><svg><use href="#i-clip"/></svg>HITHAT (9)</h4><svg class="notes" viewBox="0 0 681 45"><polyline class="hats" points="0,15 11,15 22,15 27,26 32,31 43,36 54,41 75,15 86,31 96,36 107,41 118,36 128,31 139,15 181,15 192,15 203,15 213,15 224,15 235,15 245,15 256,15 261,20 266,26 272,31 277,36 309,15 352,15 362,15 373,15 383,15 394,15 405,15 415,15 426,15 431,20 437,26 447,31 458,36 469,15 479,15 511,15 522,15 532,15 543,15 554,15 559,15 564,15 575,15 586,15 596,15 607,15 617,15 628,15 638,15 660,15 670,15"/></svg></div></div>
                <div class="lane"><div class="clip b8 grey"><h4><svg><use href="#i-clip"/></svg>Clap [ Paint ]</h4><svg class="notes" viewBox="0 0 681 45"><polyline class="hits" points="43,43 128,43 213,43 298,43 330,43 383,43 469,43 554,43 638,43 649,43 660,43 670,43"/></svg></div></div>
                <div class="lane"><div class="clip b6 deep"><h4><svg><use href="#i-clip"/></svg>Perc (WheezyOuttaHere)</h4><svg class="notes" viewBox="0 0 681 45"><polyline class="hits" points="22,43 27,43 32,43 86,43 102,43 118,43 192,43 298,43 303,43 309,43 314,43 319,43 325,43 330,43 335,43 426,43 441,43 458,43"/></svg></div></div>
                <div class="lane"><div class="clip b8 red"><h4><svg><use href="#i-clip"/></svg>snare (wheezy)</h4></div></div>
              </div>
              <div class="playhead"></div>
            </div>
            <div class="vscroll"><div class="thumb"></div><span>⌄</span></div>
            <svg class="marker" viewBox="0 0 12 8"><path d="M0 0h12v2L6 8L0 2z" fill="#b6f03c"/></svg>
          </div>
        </div>
      </section>
    </section>

    <div class="float first"><span class="tri">▶</span><svg viewBox="0 0 12 12"><use href="#i-gear"/></svg><span class="name">Heat Up 3 #2 <i>(M...</i></span><span class="tri">▶</span><button>–</button><button>✕</button></div>
    <div class="float last"><span class="tri">▶</span><svg viewBox="0 0 12 12"><use href="#i-gear"/></svg><span class="name">Heat Up 3 #5 <i>(M...</i></span><span class="tri">▶</span><button>–</button><button>✕</button></div>
    <svg class="cursor" viewBox="0 0 9 14"><path d="M1 1v11l2.500-2.500L5 13l2-1-1.500-3H8z" fill="#111" stroke="#fff" stroke-width=".9"/></svg>
  </main>

  <footer class="dockarea">
    <div class="dock">
      <div class="apps main-apps">
        <div class="app run"><svg viewBox="0 0 30 30"><rect width="30" height="30" rx="7" fill="url(#gblue)"/><path d="M16 0h7a7 7 0 0 1 7 7v16a7 7 0 0 1-7 7h-5c-1-4-1-7-1-12h-4c0-7 1-13 3-18z" fill="#eef2f6"/><path d="M8 9v3M22 9v3M6 20c5 5 13 5 18 0" fill="none" stroke="#1c2a3c" stroke-width="1.400"/></svg></div>
        <div class="app run"><svg viewBox="0 0 30 30"><use href="#i-compass"/></svg></div>
        <div class="app"><svg viewBox="0 0 30 30"><rect width="30" height="30" rx="7" fill="#b8b4c0"/><path d="M5 5h6v6H5z" fill="#74d247"/><path d="M12 5h6v6h-6z" fill="#f0a13a"/><path d="M19 5h6v6h-6z" fill="#f0a13a"/><path d="M5 12h6v6H5z" fill="#d83c4a"/><path d="M12 12h6v6h-6z" fill="#8d9097"/><path d="M19 12h6v6h-6z" fill="#e44064"/><path d="M5 19h6v6H5z" fill="#a04be0"/><path d="M12 19h6v6h-6z" fill="#3f8be8"/><path d="M19 19h6v6h-6z" fill="#3f6be8"/></svg></div>
        <div class="app"><svg viewBox="0 0 30 30"><rect width="30" height="30" rx="7" fill="url(#gblue)"/><rect x="5" y="9" width="21" height="14" rx="2" fill="#f1f1ee"/><path d="M5 10l10.500 8L26 10M5 22l8-7M26 22l-8-7" fill="none" stroke="#8d949c"/></svg></div>
        <div class="app"><svg viewBox="0 0 30 30"><rect width="30" height="30" rx="7" fill="url(#ggreen)"/><rect x="5" y="9" width="14" height="13" rx="3" fill="#fff"/><path d="M20 13l5-3v11l-5-3z" fill="#fff"/></svg><b class="badge">2</b></div>
        <div class="app"><svg viewBox="0 0 30 30"><rect width="30" height="30" rx="7" fill="url(#ggreen)"/><ellipse cx="15" cy="14" rx="10.500" ry="8.500" fill="#f4f8f3"/><path d="M8 19c0 3-1 4-3 5 3 0 5-1 6-3z" fill="#f4f8f3"/></svg><b class="badge wide">240</b></div>
        <div class="app"><svg viewBox="0 0 30 30"><rect width="30" height="30" rx="7" fill="#e8e3d4"/><path d="M0 7a7 7 0 0 1 7-7l15 30H7a7 7 0 0 1-7-7z" fill="#7fce6a"/><path d="M12 0l18 22V8l-7-8z" fill="#5cba60"/><path d="M0 16L30 4v6L0 24z" fill="#f3e4e8"/><path d="M8 0h6v18H8z" fill="#3d78e0"/><path d="M19 30l11-9v6l-4 3z" fill="#e57a9c"/><circle cx="12" cy="18" r="7" fill="#3b82ea" stroke="#fff"/><path d="M12 13l4 9-4-2-4 2z" fill="#fff"/></svg></div>
        <div class="app"><svg viewBox="0 0 30 30"><rect width="30" height="30" rx="7" fill="#f7f6f4"/><g opacity=".8"><ellipse cx="15" cy="8" rx="4" ry="6" fill="#f39a2e"/><ellipse cx="15" cy="8" rx="4" ry="6" fill="#e8c62f" transform="rotate(45 15 15)"/><ellipse cx="15" cy="8" rx="4" ry="6" fill="#8ac449" transform="rotate(90 15 15)"/><ellipse cx="15" cy="8" rx="4" ry="6" fill="#45b39a" transform="rotate(135 15 15)"/><ellipse cx="15" cy="8" rx="4" ry="6" fill="#4a8fe0" transform="rotate(180 15 15)"/><ellipse cx="15" cy="8" rx="4" ry="6" fill="#8a68cf" transform="rotate(225 15 15)"/><ellipse cx="15" cy="8" rx="4" ry="6" fill="#c65aa3" transform="rotate(270 15 15)"/><ellipse cx="15" cy="8" rx="4" ry="6" fill="#e8503c" transform="rotate(315 15 15)"/></g></svg></div>
        <div class="app cal"><span>APR</span><strong>22</strong></div>
        <div class="app"><svg viewBox="0 0 30 30"><rect width="30" height="30" rx="7" fill="#a47b45"/><path d="M29 6v5M29 13v5M29 20v4" stroke="#7dbbd0" stroke-width="2"/><circle cx="15" cy="15" r="9" fill="none" stroke="#7c5a2c"/><circle cx="15" cy="12" r="4" fill="#7f5d31"/><path d="M8 21c2-5 12-5 14 0-4 4-10 4-14 0z" fill="#7f5d31"/></svg></div>
        <div class="app"><svg viewBox="0 0 30 30"><rect width="30" height="30" rx="7" fill="#f4f4f4"/><circle cx="6" cy="7" r="2.500" fill="#3b7fe4"/><circle cx="6" cy="15" r="2.500" fill="#e4553b"/><circle cx="6" cy="22" r="2.500" fill="#ee9b43"/><path d="M11 7h15M11 15h15M11 22h15" stroke="#b5b5b5"/></svg><b class="badge">4</b></div>
        <div class="app"><svg viewBox="0 0 30 30"><rect width="30" height="30" rx="7" fill="#f3f2ee"/><path d="M0 8V7a7 7 0 0 1 7-7h16a7 7 0 0 1 7 7v1z" fill="#f4c92f"/><path d="M0 15h30M0 22h30" stroke="#d2d0ca"/></svg></div>
        <div class="app"><svg viewBox="0 0 30 30"><rect width="30" height="30" rx="7" fill="#ee3b57"/><path d="M11 22V8l11-2v13" fill="none" stroke="#fff" stroke-width="2"/><path d="M11 9l11-2v3l-11 2z" fill="#fff"/><ellipse cx="8.500" cy="22" rx="3" ry="2.500" fill="#fff"/><ellipse cx="19.500" cy="19.500" rx="3" ry="2.500" fill="#fff"/></svg></div>
        <div class="app"><svg viewBox="0 0 30 30"><rect width="30" height="30" rx="7" fill="#9b45d6"/><circle cx="15" cy="14" r="9.500" fill="none" stroke="#fff" stroke-width="1.500"/><circle cx="15" cy="14" r="6" fill="none" stroke="#fff" stroke-width="1.500"/><circle cx="15" cy="13" r="2.500" fill="#fff" stroke="#9b45d6"/><path d="M12 17h6l-1 9h-4z" fill="#fff" stroke="#9b45d6"/></svg></div>
        <div class="app tv"><svg viewBox="0 0 12 14"><path d="M8.300 0c.1 1.600-1.100 3-2.600 3.100C5.600 1.600 6.900.2 8.300 0zM11.600 10.300c-.6 1.500-1.600 3.200-2.900 3.200-1 0-1.200-.6-2.400-.6s-1.500.6-2.400.6C2.200 13.500.3 10.300.3 7.700c0-2.500 1.600-3.900 3.200-3.900 1 0 1.900.7 2.600.7.600 0 1.700-.8 3-.8 1 0 1.900.5 2.400 1.300-2.300 1.400-1.900 4.400.1 5.300z" fill="#fff"/></svg><span>tv</span></div>
        <div class="app"><svg viewBox="0 0 30 30"><rect width="30" height="30" rx="7" fill="#f7f2f3"/><path d="M6 6h7l11 13v5h-6L6 11zM17 6h7v8zM6 16l7 8H6z" fill="#d7385a"/></svg></div>
        <div class="app"><svg viewBox="0 0 30 30"><rect width="30" height="30" rx="7" fill="url(#ggreen)"/><path d="M6 19h3v6H6zM11 13h3v12h-3zM16 6h3v19h-3zM21 10h3v15h-3z" fill="#fff"/></svg></div>
        <div class="app"><svg viewBox="0 0 30 30"><rect width="30" height="30" rx="7" fill="url(#gblue)"/><path d="M7 13l2-8h12l2 8z" fill="#f3f5f7"/><path d="M6 13h18v1.500H6zM14.300 14h1.400v11h-1.400zM10 25h10v1H10z" fill="#fff"/><circle cx="15" cy="9" r="2.500" fill="#56b15c"/><path d="M15 9V6.500A2.500 2.500 0 0 1 17.500 9z" fill="#e5554b"/></svg></div>
        <div class="app"><svg viewBox="0 0 30 30"><rect width="30" height="30" rx="7" fill="#f29a34"/><path d="M7 22L21 7l2 2L10 23l-4 1z" fill="#fff"/><path d="M5 25h20" stroke="#ffe0b0" stroke-width="1.500"/></svg></div>
        <div class="app"><svg viewBox="0 0 30 30"><rect width="30" height="30" rx="7" fill="#3191f1"/><path d="M13 6l8 15M17 6L9 20M5 18h13M21 18h4M8 22l-1 2" fill="none" stroke="#fff" stroke-width="2.200"/></svg></div>
        <div class="app"><svg viewBox="0 0 30 30"><rect width="30" height="30" rx="7" fill="#f6f6f6"/><circle cx="15" cy="15" r="12" fill="#3ba757"/><path d="M15 9h10.400A12 12 0 0 1 15 27l5-9z" fill="#f4c42c"/><path d="M15 9h10.400A12 12 0 0 0 4.600 9L10 18z" fill="#e0443a"/><circle cx="15" cy="15" r="6" fill="#fff"/><circle cx="15" cy="15" r="4.600" fill="#3d7fe6"/></svg></div>
        <div class="app"><svg viewBox="0 0 30 30"><rect width="30" height="30" rx="7" fill="#9a9da2"/><circle cx="15" cy="15" r="11.500" fill="#3c3f43"/><circle cx="15" cy="15" r="8.500" fill="none" stroke="#a9acb0" stroke-width="2"/><circle cx="15" cy="15" r="10.800" fill="none" stroke="#a9acb0" stroke-dasharray="1 1.200"/><path d="M15 15h8M15 15l-4-7M15 15l-4 7" stroke="#a9acb0" stroke-width="2"/></svg></div>
        <div class="app"><svg viewBox="0 0 30 30"><rect width="30" height="30" rx="7" fill="#f8f9fb"/><path d="M20 5l5 2v16l-5 2L9 15z" fill="#3aa0e8"/><path d="M20 9v12l-7-6zM5 12l2-1 14 11-1 3zM5 18l2 1L21 8l-1-3z" fill="#2273c0"/><path d="M20 10v10l-6-5z" fill="#f8f9fb"/></svg></div>
      </div>
      <i class="rule"></i>
      <div class="apps recent">
        <div class="app run"><svg viewBox="0 0 30 30"><rect width="30" height="30" rx="7" fill="#15153a"/><circle cx="15" cy="15" r="12" fill="#17171b" stroke="#e9e9e9" stroke-width="1.500"/><path d="M15 15c-5-1-6-5-3-9M15 15c5-3 9-1 9 3M15 15c1 5-2 8-7 7" fill="none" stroke="#e9e9e9" stroke-width="2"/></svg></div>
        <div class="app run"><svg viewBox="0 0 30 30"><rect width="30" height="30" rx="5" fill="#39393d"/><path d="M3 3h24v3H3zM3 8h24" stroke="#1a1a1c" fill="#1a1a1c"/><path d="M3 12h24v15H3z" fill="#f1f1f1"/><path d="M7 12v15M11 12v15M15 12v15M19 12v15M23 12v15" stroke="#333" stroke-width=".8"/><path d="M6 12h2.500v9H6zM10 12h2.500v9H10zM18 12h2.500v9H18zM22 12h2.500v9H22z" fill="#111"/></svg></div>
        <div class="app run fruit"><svg viewBox="0 0 36 36"><circle cx="18" cy="19" r="16.500" fill="#3c3d42" stroke="#77757c"/><path d="M11 12c6-4 13-1 16 4 2 4-2 14-9 17-6-1-12-13-7-21z" fill="url(#gfruit)"/><path d="M19 9c-4-4-8-3-10 2 4-1 5 1 6 4l3-4 4 4 1-4 5 2c-1-4-4-6-7-4l3-7-2-1z" fill="#5fae34"/></svg></div>
        <div class="app"><svg viewBox="0 0 30 30"><use href="#i-compass"/></svg><b class="badge phone">▯</b></div>
      </div>
      <i class="rule"></i>
      <div class="app trash"><svg viewBox="0 0 30 34"><path d="M3 4h24l-3 28H6z" fill="#86888c"/><path d="M7 6l2 25M12 6l1 26M18 6l-1 26M23 6l-2 25" stroke="#a6a8ab"/><path d="M3 5c1-4 4-4 6-3l3-1 4 1 4-2 3 2c3 0 4 1 4 3-6 3-18 3-24 0z" fill="#e8e8e6"/><path d="M7 4l3 1M13 3l2 2M20 3l-2 2" stroke="#44464a"/></svg></div>
    </div>
  </footer>
</div>
</body>
</html>
```
FILE: styles.css
```
* { box-sizing: border-box; }
:root {
  --ui: "Noto Sans", "Open Sans", sans-serif;
  --cond: "Roboto", sans-serif;
}
body { margin: 0; background: #000; color: #d9dee1; font-family: var(--ui); font-size: 10px; line-height: 12px; }
ul { margin: 0; padding: 0; list-style: none; }
a { color: inherit; text-decoration: none; }
button { border: 0; padding: 0; margin: 0; background: none; color: inherit; font: inherit; display: flex; align-items: center; justify-content: center; }
i, em { font-style: normal; }
.defs { position: absolute; width: 0; height: 0; }
.tri { font-size: 6px; color: #9aa2a7; }
.desktop { display: flex; flex-direction: column; height: 100vh; margin: 0 66px 0 65px; overflow: hidden; }

/* system menu bar */
.menubar { display: flex; align-items: center; flex: 0 0 20px; padding: 0 15px 0 16px; background: linear-gradient(90deg, #3f118f, #2a0a9c 40%, #22039c); color: #fff; font: 11px/18px "Inter", sans-serif; }
.apple { width: 11px; height: 13px; margin-right: 15px; }
.macmenu { display: flex; gap: 16px; }
.strong { font-weight: 700; }
.status { display: flex; align-items: center; gap: 12px; margin-left: auto; }
.status svg { width: 16px; height: 14px; }
.status .battery, .status .control { width: 20px; }
.clock { white-space: nowrap; }

/* toolbars */
.window { position: relative; display: flex; flex-direction: column; flex: 1; min-height: 0; background: #3a424a; }
.bar { display: flex; align-items: center; flex: 0 0 33px; padding: 0 10px 0 3px; background: #575f64; border-bottom: 1px solid #495056; }
.bar.second { flex-basis: 32px; }
.left-tools { display: flex; align-items: center; flex: 0 0 294px; min-width: 0; }
.lights { display: flex; gap: 6px; margin: 0 9px 0 6px; }
.lights button { width: 10px; height: 10px; border-radius: 50%; }
.red { background: #e0605a; }
.amber { background: #e8b04c; }
.lime { background: #5bcb55; }
.appmenu { display: flex; justify-content: space-between; flex: 1; min-width: 0; margin-right: 5px; padding: 0 2px; height: 25px; align-items: center; background: #627a75; border: 1px solid #6f7f7d; font: 9px/14px var(--cond); color: #eef2f1; }
.transport { display: flex; align-items: center; justify-content: space-between; flex: 0 0 150px; }
.playgroup { display: flex; width: 79px; height: 27px; border-radius: 12px; overflow: hidden; background: #333940; border: 1px solid #262c31; }
.playgroup button { flex: 1; border-right: 1px solid #23292e; }
.playgroup svg { width: 8px; height: 8px; }
.playgroup .mode { flex-direction: column; font-size: 8px; line-height: 12px; color: #5c6367; align-items: stretch; }
.mode .on { background: #a5e45a; color: #22311a; }
.record { width: 21px; height: 21px; border-radius: 50%; background: radial-gradient(#f0524e 0 4px, #4a5056 5px); border: 1px solid #2e3439; }
.tempo { width: 44px; height: 20px; border-radius: 4px; background: #b9c3c8; color: #23292d; font: 13px/20px var(--cond); padding-left: 3px; white-space: nowrap; }
.tempo small { font-size: 8px; }
.five { display: flex; justify-content: space-between; flex: 0 0 130px; margin-left: 7px; }
.tool { width: 24px; height: 26px; flex: none; background: #3f464c; border: 1px solid #2d3338; border-radius: 2px; color: #d9dee1; }
.tool svg { width: 20px; height: 20px; }
.tool.hot { background: radial-gradient(#ffe9bc, #f6a94f); color: #6b4012; border-color: #d37a2a; }
.tool.green { background: #566d67; }
.digits { font-style: italic; font-size: 10px; }
.time { position: relative; flex: 0 0 102px; height: 26px; margin-left: 2px; background: #526560; color: #f0f4f3; text-align: right; padding-right: 11px; line-height: 26px; font-family: var(--cond); white-space: nowrap; }
.time .big { font-size: 22px; }
.time .small { font-size: 14px; }
.time small { position: absolute; right: 1px; top: 1px; font: 5px/6px var(--ui); }
.scope { width: 70px; height: 26px; flex: none; margin-left: 5px; background: #363d44; }
.peaks { flex: 0 0 61px; height: 26px; margin-left: 2px; display: flex; flex-direction: column; gap: 1px; }
.peak { height: 8px; background: linear-gradient(90deg, #e5e4e1, #dccfa8 55%, #cf8a60 90%, #b95a4a); }
.cpu { display: grid; grid-template-columns: 1fr 48px; flex: 1; min-width: 100px; height: 26px; margin: 0 5px; background: #32393f; position: relative; text-align: right; padding-right: 2px; font: 9px/13px var(--cond); color: #dfe3e5; }
.cpu svg { position: absolute; left: 0; top: 0; width: 68px; height: 26px; }
.load { padding-right: 4px; }
.mem { display: flex; justify-content: space-between; white-space: nowrap; }
.mem i { width: 8px; height: 9px; margin-top: 2px; background: #d5d9db; }
.poly { grid-column: 2; padding-right: 14px; }
.seven { display: flex; justify-content: space-between; flex: 0 0 182px; }
.hint { position: relative; display: flex; flex-direction: column; flex: 0 0 226px; height: 27px; padding: 1px 3px; background: #434b51; border: 1px solid #373e44; color: #c9ced2; }
.hint svg { position: absolute; right: 2px; bottom: 2px; width: 10px; height: 12px; }
.knobs { display: flex; justify-content: space-between; flex: 0 0 60px; margin-left: 3px; }
.knobs svg { width: 28px; height: 28px; }
.volume { flex: 0 0 138px; width: 138px; margin: 0 0 0 14px; appearance: none; height: 14px; background: linear-gradient(#a6e04f, #a6e04f) 0 50% / 50% 4px no-repeat, linear-gradient(#6f777c, #6f777c) 0 50% / 100% 3px no-repeat; }
.volume::-webkit-slider-thumb { appearance: none; width: 12px; height: 14px; border-radius: 6px; border: 1px solid #22282c; background: linear-gradient(90deg, #30373c 45%, #aeb5b9 45% 55%, #30373c 55%); }
.second .five { margin-left: 10px; }
.snap { display: flex; align-items: center; gap: 3px; flex: 0 0 64px; margin-left: 4px; color: #343b40; }
.snap svg { width: 11px; height: 12px; flex: none; }
.snap select { appearance: none; width: 50px; flex: none; height: 18px; border: 1px solid #24292d; border-radius: 2px; background: #353c42; color: #dfe3e5; font: 9px/14px var(--ui); padding: 0 2px; }
.snap .tri { margin-left: -11px; }
.patsel { display: flex; height: 22px; flex: 0 0 103px; margin-left: 7px; }
.patsel button { flex: 0 0 13px; background: #3f464c; border: 1px solid #2e3439; font-size: 8px; }
.patsel button:last-child { font-size: 12px; }
.patsel output { flex: 1; background: #b3c0c4; color: #2b3338; font: 11px/22px var(--cond); text-align: center; overflow: hidden; white-space: nowrap; }
.ten { display: flex; justify-content: space-between; flex: 0 0 262px; margin-left: 5px; }
.news { display: flex; align-items: center; justify-content: space-between; flex: 1; height: 26px; margin-left: 3px; padding: 0 4px 0 2px; background: #50625d; border: 1px solid #5f716c; color: #e1e7e4; font-size: 8px; line-height: 12px; white-space: nowrap; }
.news em { color: #9cada6; }
.news svg { width: 12px; height: 12px; flex: none; }

/* browser */
.work { display: flex; flex: 1; min-height: 0; }
.browser { position: relative; z-index: 1; display: flex; flex-direction: column; flex: 0 0 166px; min-width: 0; background: #3a3d44; }
.browser-title { display: flex; align-items: center; gap: 3px; flex: 0 0 19px; padding-left: 7px; background: #454d54; color: #788086; font-size: 9px; white-space: nowrap; }
.browser-title svg { width: 11px; height: 11px; }
.browser-title b { color: #b7bdc1; font-weight: 400; }
.browser-tabs { display: flex; justify-content: space-around; flex: 0 0 20px; padding: 0 2px; background: #454d54; color: #9ba2a6; }
.browser-tabs svg { width: 12px; height: 12px; }
.browser-tabs .gold { color: #c7a049; }
.tree { display: flex; flex-direction: column; flex: 1; min-height: 0; padding: 0 0 3px 11px; background: linear-gradient(90deg, #282f36 11px, #34353c 11px); font-family: var(--cond); }
.folders { font-size: 10px; color: #8fb6a0; background: #18222a; }
.folders li { display: flex; align-items: center; gap: 3px; height: 19px; padding-left: 17px; }
.folders li:first-child { height: 18px; }
.folders svg { width: 12px; height: 12px; }
.folders .open { background: #242c33; color: #d5e6dc; }
.folders .open span { margin-left: auto; font-size: 8px; color: #10161a; }
.files { display: grid; grid-auto-rows: 1fr; flex: 1; font-size: 9px; color: #b4b7be; }
.files li { display: flex; align-items: center; gap: 4px; padding-left: 17px; white-space: nowrap; }
.files svg { width: 10px; height: 10px; flex: none; }
.files .long { font-size: 8px; }
.splitter { flex: 0 0 7px; background: #343c43; border-right: 1px solid #262d33; }

/* playlist */
.playlist { display: flex; flex-direction: column; flex: 1; min-width: 0; background: #39424a; }
.pl-title { display: flex; align-items: center; gap: 6px; flex: 0 0 19px; padding: 0 5px 0 8px; background: #434b52; }
.pl-tools { display: flex; gap: 4px; flex: 0 0 181px; align-items: center; color: #d9dee1; padding-left: 2px; }
.pl-tools svg, .speaker { width: 13px; height: 13px; flex: none; }
.pl-tools .after { margin-left: 10px; }
.pl-tools .sel { color: #62b7e4; }
.crumb { font-size: 11px; white-space: nowrap; }
.pl-title .crumb:not(:last-of-type) { margin-right: -1px; }
.winbtns { display: flex; gap: 5px; margin-left: auto; }
.winbtns svg { width: 10px; height: 10px; }
.pl-body { display: flex; flex: 1; min-height: 0; }
.picker { display: flex; flex-direction: column; flex: 0 0 124px; background: #39424a; border-right: 1px solid #262e35; }
.picker-tabs { display: flex; justify-content: space-between; flex: 0 0 34px; padding: 8px 22px 0 12px; color: #8d959a; }
.picker-tabs svg { width: 14px; height: 12px; }
.lit, .picker-tabs .lit { color: #e6eaec; }
.picker-main { display: flex; flex: 1; min-height: 0; padding-top: 2px; background: #303c45; }
.patterns { display: grid; grid-auto-rows: 1fr; height: 446px; flex: 0 0 109px; margin-left: 2px; font: 10px/14px var(--cond); color: #e1e6e8; }
.patterns li { position: relative; display: flex; align-items: center; gap: 2px; margin-bottom: 2px; padding-left: 2px; background: linear-gradient(#626a70, #525a60); border-right: 4px solid #b9c3c8; white-space: nowrap; overflow: hidden; }
.patterns li > svg:first-child { width: 7px; height: 8px; flex: none; }
.patterns .dim { background: linear-gradient(#4c545a, #434b51); }
.patterns .edge0 { border-right: 0; }
.patterns .teal { background: #4c605f; }
.patterns .blue { background: linear-gradient(#5c6888, #4c5877); }
.patterns .white { border-color: #fff; }
.patterns .long { font-size: 9px; }
.patterns .current { outline: 1px solid #7f9c63; outline-offset: -1px; background: linear-gradient(90deg, #c62d48 4px, transparent 4px), #596167; }
.mini { position: absolute; right: 0; top: 1px; width: 60px; height: 20px; stroke: #7b858b; fill: none; opacity: .5; }
.picker-scroll { flex: 1; margin-right: 1px; background: #323a41; border-left: 1px solid #272e34; }
.picker-scroll span { display: block; height: 11px; background: #555d63; text-align: center; font-size: 6px; line-height: 11px; color: #20262a; }
.add { flex: 0 0 15px; margin-right: 10px; }
.add svg { width: 7px; height: 7px; }
.arrange { position: relative; display: grid; grid-template: 34px minmax(0, 1fr) / 89px minmax(0, 1fr) 15px; flex: 1; min-width: 0; padding-left: 5px; }
.head-tabs { border: 1px solid #2a3137; border-width: 1px 0 0 1px; border-radius: 20px 0 0 0; background: #454c53; padding: 2px 4px 0 28px; color: #747c82; }
.icons { display: flex; justify-content: space-between; }
.icons svg { width: 14px; height: 12px; }
.modes { display: flex; justify-content: space-between; font-size: 6px; line-height: 18px; margin-left: 4px; }
.modes b { color: #e6eaec; }
.timeline-top { display: flex; flex-direction: column; min-width: 0; }
.overview { display: flex; flex: 0 0 19px; padding: 2px 0; background: #363d44; }
.overview button { flex: 0 0 15px; background: #454c53; }
.overview .end { margin-left: auto; background: #50575d; }
.overview svg { width: 258px; height: 15px; }
.ruler { display: flex; flex: 1; overflow: hidden; background: #1e282f; color: #b3babe; font-size: 8px; line-height: 14px; }
.ruler span { flex: 0 0 85px; }
.corner { display: grid; grid-template-rows: 1fr 1fr; gap: 1px; text-align: center; line-height: 17px; color: #20262a; }
.corner span { background: #50575d; }
.tracks { position: relative; grid-column: 1 / 3; display: grid; grid-template-columns: 89px minmax(0, 1fr); grid-template-rows: 538px; min-height: 0; overflow: hidden; }
.heads, .lanes { display: grid; grid-template-columns: minmax(0, 1fr); grid-template-rows: repeat(12, minmax(0, 1fr)); }
.head { position: relative; padding: 0 1px; border-bottom: 1px solid #20272c; border-right: 9px solid #b9cad2; background: linear-gradient(#5c6369, #535a60); font: 10px/13px var(--cond); color: #e3e7e9; white-space: nowrap; }
.head span { display: block; }
.head::before { content: ""; position: absolute; right: 5px; bottom: 3px; width: 7px; height: 7px; border-radius: 50%; background: #a8ec5a; border: 1px solid #3c6223; }
.head svg { position: absolute; right: 18px; bottom: 2px; width: 9px; height: 12px; }
.head.dark { background: linear-gradient(#4e555b, #464d54); border-right-color: #9fb2ba; }
.head.blue { background: linear-gradient(#57648a, #4d5a7c); border-right-color: #8e9ccb; }
.head.none { border-right-color: #2b363d; }
.head.white { border-right-color: #fff; }
.head.tight { font-size: 9px; }
.lanes { background:
  repeating-linear-gradient(90deg, #1b252c 0 1px, transparent 1px 85px),
  repeating-linear-gradient(90deg, #253039 0 1px, transparent 1px 21px, #253039 21px 22px, transparent 22px 42px, #253039 42px 43px, transparent 43px 64px, #253039 64px 65px, transparent 65px 85px),
  repeating-linear-gradient(90deg, transparent 0 10px, rgba(36, 48, 56, .6) 10px 11px, transparent 11px 31px, rgba(36, 48, 56, .6) 31px 32px, transparent 32px 53px, rgba(36, 48, 56, .6) 53px 54px, transparent 54px 74px, rgba(36, 48, 56, .6) 74px 75px, transparent 75px 85px),
  linear-gradient(90deg, transparent 680px, #33434d 680px), #303e46; }
.lane { border-bottom: 1px solid #1c262c; min-width: 0; }
.clip { position: relative; height: 100%; background: rgba(30, 41, 48, .7); }
.clip h4 { display: flex; align-items: center; gap: 2px; height: 12px; margin: 0; padding-left: 1px; background: #485057; color: #c5cace; font: 9px/12px var(--cond); white-space: nowrap; overflow: hidden; }
.clip h4 svg { width: 7px; height: 8px; flex: none; }
.b1 { width: 85px; }
.b6 { width: 510px; }
.b7 { width: 595px; }
.b8 { width: 680px; }
.clip.teal { background: rgba(46, 59, 63, .75); }
.clip.teal h4 { background: #53646a; }
.clip.blue { background: rgba(46, 58, 86, .85); }
.clip.blue h4 { background: linear-gradient(#616d92, #566284); }
.clip.grey { background: rgba(50, 61, 66, .6); }
.clip.grey h4, .clip.deep h4 { background: #596167; }
.clip.red { background: rgba(50, 61, 66, .6); }
.clip.red h4 { background: #74121f; color: #e5a2a4; }
.notes { position: absolute; left: 0; top: 0; width: 681px; height: 45px; stroke: #b4bfc5; fill: none; }
.n2 { stroke-width: 2; }
.n3 { stroke-width: 3; }
.n4 { stroke-width: 4; stroke: #c0cccf; }
.n5 { stroke-width: 5; }
.clip.blue .notes { stroke: #ccd4ec; }
.hits, .hats { stroke: none; marker-start: url(#hit); marker-mid: url(#hit); marker-end: url(#hit); }
.hats { marker-start: url(#hat); marker-mid: url(#hat); marker-end: url(#hat); }
.playhead { position: absolute; left: 412px; top: 0; bottom: 0; width: 17px; background: linear-gradient(90deg, rgba(80, 150, 40, 0), rgba(82, 145, 45, .6) 13px, #85bd44 13px 14px, rgba(50, 80, 50, .4) 16px); }
.marker { position: absolute; left: 425px; top: 20px; width: 12px; height: 8px; }
.vscroll { display: flex; flex-direction: column; justify-content: space-between; background: #363b42; text-align: center; color: #20262a; }
.thumb { height: 28px; background: #555d63; }
.vscroll span { height: 15px; background: #4b5258; }

/* overlay windows */
.float { position: absolute; display: flex; align-items: center; gap: 7px; width: 165px; height: 21px; padding: 0 5px 0 8px; background: #40474e; border: 1px solid #363d43; box-shadow: 0 1px 4px rgba(0, 0, 0, .4); color: #6e767b; white-space: nowrap; }
.float svg { width: 12px; height: 12px; }
.float .name { flex: 1; }
.float button { color: #abb2b6; }
.first { right: 132px; top: 57px; }
.last { right: 72px; top: 119px; }
.cursor { position: absolute; left: 260px; top: 493px; width: 9px; height: 14px; }

/* dock */
.dockarea { flex: 0 0 50px; padding: 0 30px 0 31px; background: linear-gradient(90deg, #12052e, #1d0a4c 35%, #4a0a78 65%, #330763 82%, #0a0338); border-top: 1px solid #0c0820; }
.dock { display: flex; align-items: center; justify-content: space-between; height: 44px; padding: 0 6px 0 5px; border: 1px solid rgba(150, 120, 200, .35); border-radius: 10px; background: rgba(20, 8, 50, .25); }
.apps { display: flex; justify-content: space-between; }
.main-apps { flex: 0 0 855px; }
.recent { flex: 0 0 144px; }
.app { position: relative; width: 30px; height: 30px; }
.app > svg { display: block; width: 30px; height: 30px; }
.run::after { content: ""; position: absolute; left: 13px; bottom: -6px; width: 3px; height: 3px; border-radius: 50%; background: #b9a7de; }
.badge { position: absolute; right: -4px; top: -4px; min-width: 13px; height: 13px; border-radius: 7px; background: #dc3a3d; color: #fff; font: 8px/13px "Inter", sans-serif; text-align: center; }
.badge.wide { min-width: 16px; }
.badge.phone { background: #d4d6da; color: #222; }
.cal { border-radius: 7px; background: #f6f6f6; color: #333; text-align: center; overflow: hidden; }
.cal span { display: block; height: 9px; background: #de4246; color: #fff; font: 6px/10px "Inter", sans-serif; }
.cal strong { display: block; font: 17px/20px "Inter", sans-serif; }
.tv { display: flex; align-items: center; justify-content: center; gap: 1px; border-radius: 7px; background: #17171a; color: #fff; font: 12px/14px "Inter", sans-serif; }
.app.tv > svg { width: 8px; height: 10px; }
.fruit > svg { width: 36px; height: 36px; margin: -4px -3px -2px; }
.rule { width: 1px; height: 34px; background: #6a4b93; }
.trash > svg { height: 34px; margin-top: -2px; }
```
